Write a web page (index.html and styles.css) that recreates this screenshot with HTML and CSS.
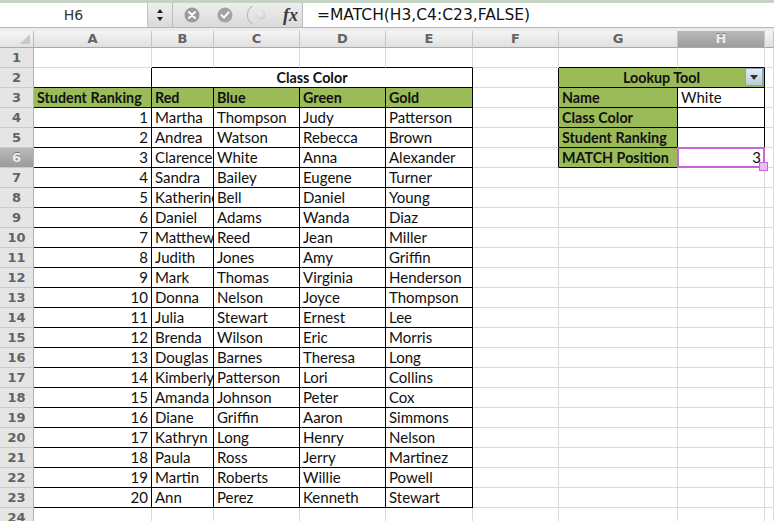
FILE: index.html
```html
<!DOCTYPE html>
<html lang="en">
<head>
<meta charset="UTF-8">
<title>MATCH lookup</title>
<link rel="stylesheet" href="styles.css">
</head>
<body>
<div class="topline"></div>

<!-- formula bar -->
<div class="fbar">
<div class="namebox">H6</div>
<div class="spin">
<svg width="8" height="14" viewBox="0 0 8 14"><path d="M4 1 L7 5 H1 Z M4 13 L7 9 H1 Z" fill="#222"/></svg>
</div>
<div class="tools">
<svg class="tool-cancel" width="16" height="16" viewBox="0 0 16 16">
<circle cx="8" cy="8" r="7.5" fill="#9c9c9c"/>
<path d="M5 5 L11 11 M11 5 L5 11" stroke="#fff" stroke-width="2" stroke-linecap="round"/>
</svg>
<svg class="tool-ok" width="16" height="16" viewBox="0 0 16 16">
<circle cx="8" cy="8" r="7.5" fill="#a3a3a3"/>
<path d="M4.5 8.2 L7 10.6 L11.6 5.4" stroke="#fff" stroke-width="2" fill="none" stroke-linecap="round" stroke-linejoin="round"/>
</svg>
<svg class="tool-fn" width="28" height="22" viewBox="0 0 28 22">
<defs>
<radialGradient id="knob" cx="0.4" cy="0.35" r="0.7">
<stop offset="0" stop-color="#f4f4f4"/>
<stop offset="1" stop-color="#c9c9c9"/>
</radialGradient>
</defs>
<path d="M10 2 A10 10 0 0 0 10 20" stroke="#bdbdbd" stroke-width="1.2" fill="none"/>
<circle cx="18" cy="11" r="4.5" fill="url(#knob)"/>
</svg>
<span class="fx">fx</span>
</div>
<div class="formula">=MATCH(H3,C4:C23,FALSE)</div>
</div>
<div class="gap"></div>

<!-- worksheet -->
<div class="sheet">
<div class="corner"></div><div class="col">A</div><div class="col">B</div><div class="col">C</div><div class="col">D</div><div class="col">E</div><div class="col">F</div><div class="col">G</div><div class="col on">H</div><div class="col"></div>

<div class="row">1</div><div></div><div class="edge-b"></div><div class="edge-b"></div><div class="edge-b"></div><div class="edge-b"></div><div></div><div class="edge-b"></div><div class="edge-b"></div><div></div>

<div class="row">2</div><div class="edge-r edge-b"></div><div class="edge bold center span4">Class Color</div><div class="edge-r"></div><div class="edge green bold center span2 lookup">Lookup Tool<span class="drop"></span></div><div></div>

<div class="row">3</div><div class="edge green bold">Student Ranking</div><div class="edge green bold">Red</div><div class="edge green bold">Blue</div><div class="edge green bold">Green</div><div class="edge green bold">Gold</div><div class="edge-r"></div><div class="edge green bold">Name</div><div class="edge">White</div><div></div>

<div class="row">4</div><div class="edge num">1</div><div class="edge">Martha</div><div class="edge">Thompson</div><div class="edge">Judy</div><div class="edge">Patterson</div><div class="edge-r"></div><div class="edge green bold">Class Color</div><div class="edge"></div><div></div>

<div class="row">5</div><div class="edge num">2</div><div class="edge">Andrea</div><div class="edge">Watson</div><div class="edge">Rebecca</div><div class="edge">Brown</div><div class="edge-r"></div><div class="edge green bold">Student Ranking</div><div class="edge"></div><div></div>

<div class="row on">6</div><div class="edge num">3</div><div class="edge">Clarence</div><div class="edge">White</div><div class="edge">Anna</div><div class="edge">Alexander</div><div class="edge-r"></div><div class="edge green bold">MATCH Position</div><div class="edge num sel">3</div><div></div>

<div class="row">7</div><div class="edge num">4</div><div class="edge">Sandra</div><div class="edge">Bailey</div><div class="edge">Eugene</div><div class="edge">Turner</div><div></div><div></div><div></div><div></div>

<div class="row">8</div><div class="edge num">5</div><div class="edge">Katherine</div><div class="edge">Bell</div><div class="edge">Daniel</div><div class="edge">Young</div><div></div><div></div><div></div><div></div>

<div class="row">9</div><div class="edge num">6</div><div class="edge">Daniel</div><div class="edge">Adams</div><div class="edge">Wanda</div><div class="edge">Diaz</div><div></div><div></div><div></div><div></div>

<div class="row">10</div><div class="edge num">7</div><div class="edge">Matthew</div><div class="edge">Reed</div><div class="edge">Jean</div><div class="edge">Miller</div><div></div><div></div><div></div><div></div>

<div class="row">11</div><div class="edge num">8</div><div class="edge">Judith</div><div class="edge">Jones</div><div class="edge">Amy</div><div class="edge">Griffin</div><div></div><div></div><div></div><div></div>

<div class="row">12</div><div class="edge num">9</div><div class="edge">Mark</div><div class="edge">Thomas</div><div class="edge">Virginia</div><div class="edge">Henderson</div><div></div><div></div><div></div><div></div>

<div class="row">13</div><div class="edge num">10</div><div class="edge">Donna</div><div class="edge">Nelson</div><div class="edge">Joyce</div><div class="edge">Thompson</div><div></div><div></div><div></div><div></div>

<div class="row">14</div><div class="edge num">11</div><div class="edge">Julia</div><div class="edge">Stewart</div><div class="edge">Ernest</div><div class="edge">Lee</div><div></div><div></div><div></div><div></div>

<div class="row">15</div><div class="edge num">12</div><div class="edge">Brenda</div><div class="edge">Wilson</div><div class="edge">Eric</div><div class="edge">Morris</div><div></div><div></div><div></div><div></div>

<div class="row">16</div><div class="edge num">13</div><div class="edge">Douglas</div><div class="edge">Barnes</div><div class="edge">Theresa</div><div class="edge">Long</div><div></div><div></div><div></div><div></div>

<div class="row">17</div><div class="edge num">14</div><div class="edge">Kimberly</div><div class="edge">Patterson</div><div class="edge">Lori</div><div class="edge">Collins</div><div></div><div></div><div></div><div></div>

<div class="row">18</div><div class="edge num">15</div><div class="edge">Amanda</div><div class="edge">Johnson</div><div class="edge">Peter</div><div class="edge">Cox</div><div></div><div></div><div></div><div></div>

<div class="row">19</div><div class="edge num">16</div><div class="edge">Diane</div><div class="edge">Griffin</div><div class="edge">Aaron</div><div class="edge">Simmons</div><div></div><div></div><div></div><div></div>

<div class="row">20</div><div class="edge num">17</div><div class="edge">Kathryn</div><div class="edge">Long</div><div class="edge">Henry</div><div class="edge">Nelson</div><div></div><div></div><div></div><div></div>

<div class="row">21</div><div class="edge num">18</div><div class="edge">Paula</div><div class="edge">Ross</div><div class="edge">Jerry</div><div class="edge">Martinez</div><div></div><div></div><div></div><div></div>

<div class="row">22</div><div class="edge num">19</div><div class="edge">Martin</div><div class="edge">Roberts</div><div class="edge">Willie</div><div class="edge">Powell</div><div></div><div></div><div></div><div></div>

<div class="row">23</div><div class="edge num">20</div><div class="edge">Ann</div><div class="edge">Perez</div><div class="edge">Kenneth</div><div class="edge">Stewart</div><div></div><div></div><div></div><div></div>

<div class="row">24</div><div></div><div></div><div></div><div></div><div></div><div></div><div></div><div></div><div></div>
</div>
</body>
</html>
```

FILE: styles.css
```css
* {
box-sizing: border-box;
}

body {
margin: 0;
background: #fff;
font-family: Lato, "Open Sans", sans-serif;
overflow: hidden;
}

/* window strip above the formula bar */
.topline {
height: 3px;
background: #c5d3c5;
}

/* formula bar */
.fbar {
display: flex;
height: 25px;
background: linear-gradient(#eeeeee, #dadada);
border-bottom: 1px solid #b6b6b6;
}

.namebox {
width: 148px;
background: #fff;
display: flex;
align-items: center;
justify-content: center;
font-family: "DejaVu Sans", sans-serif;
font-size: 14px;
color: #333;
border-right: 1px solid #c4c4c4;
}

.spin {
width: 25px;
display: flex;
align-items: center;
justify-content: center;
border-right: 1px solid #bcbcbc;
}

.tools {
width: 130px;
display: flex;
align-items: center;
padding-left: 11px;
border-right: 1px solid #bcbcbc;
}

.tool-ok {
margin-left: 17px;
}

.tool-fn {
margin-left: 10px;
}

.fx {
margin-left: 12px;
font-family: "Liberation Serif", serif;
font-style: italic;
font-weight: bold;
font-size: 18px;
color: #3a3a3a;
}

.formula {
flex: 1;
background: #fff;
padding-left: 14px;
display: flex;
align-items: center;
font-family: "DejaVu Sans", sans-serif;
font-size: 15.5px;
color: #111;
}

.gap {
height: 3px;
background: #ececec;
}

/* worksheet grid */
.sheet {
display: grid;
grid-template-columns: 34px 118px 62px 86px 86px 87px 86px 119px 87px 9px;
grid-template-rows: 17px;
grid-auto-rows: 20px;
}

.sheet > div {
border-right: 1px solid #dadada;
border-bottom: 1px solid #dadada;
padding: 0 3px;
font-size: 15px;
line-height: 19px;
white-space: nowrap;
overflow: hidden;
color: #111;
}

/* headers */
.sheet > .corner {
position: relative;
background: linear-gradient(#f6f6f6, #e2e2e2);
border-right: 1px solid #b9b9b9;
border-bottom: 1px solid #a9a9a9;
}

.corner::after {
content: "";
position: absolute;
right: 3px;
bottom: 3px;
border-left: 10px solid transparent;
border-bottom: 10px solid #c8c8c8;
}

.sheet > .col {
background: linear-gradient(#f5f5f5, #e0e0e0);
border-right: 1px solid #c6c6c6;
border-bottom: 1px solid #a9a9a9;
text-align: center;
font-family: "DejaVu Sans", sans-serif;
font-weight: bold;
font-size: 13px;
line-height: 16px;
color: #636363;
}

.sheet > .row {
background: #e5e5e5;
border-right: 1px solid #b3b3b3;
border-bottom: 1px solid #cbcbcb;
text-align: center;
font-family: "DejaVu Sans", sans-serif;
font-weight: bold;
font-size: 13px;
color: #636363;
}

.sheet > .col.on,
.sheet > .row.on {
background: linear-gradient(#b9b9b9, #9c9c9c);
color: #ececec;
text-shadow: 0 -1px 0 #7a7a7a;
}

/* cell formats */
.sheet > .edge {
border-right-color: #000;
border-bottom-color: #000;
}

.sheet > .edge-r {
border-right-color: #000;
}

.sheet > .edge-b {
border-bottom-color: #000;
}

.green {
background: #9bbb59;
}

.sheet > .bold {
font-weight: bold;
font-size: 14.3px;
}

.center {
text-align: center;
}

.num {
text-align: right;
}

.span4 {
grid-column: span 4;
}

.span2 {
grid-column: span 2;
}

/* lookup header with filter button */
.sheet > .lookup {
position: relative;
}

.drop {
position: absolute;
right: 1px;
top: 0;
width: 18px;
height: 18px;
background: linear-gradient(#e3ecf2, #b9cdd9);
border: 1px solid #88a4b4;
}

.drop::after {
content: "";
position: absolute;
left: 4px;
top: 6px;
border-left: 4px solid transparent;
border-right: 4px solid transparent;
border-top: 5px solid #333;
}

/* active cell */
.sheet > .sel {
position: relative;
overflow: visible;
}

.sel::after {
content: "";
position: absolute;
left: -1px;
top: -1px;
right: -1px;
bottom: -1px;
border: 2px solid #c865dc;
z-index: 2;
}

.sel::before {
content: "";
position: absolute;
right: -4px;
bottom: -4px;
width: 7px;
height: 7px;
background: #e8bdf2;
border: 1px solid #c865dc;
z-index: 3;
}
```
